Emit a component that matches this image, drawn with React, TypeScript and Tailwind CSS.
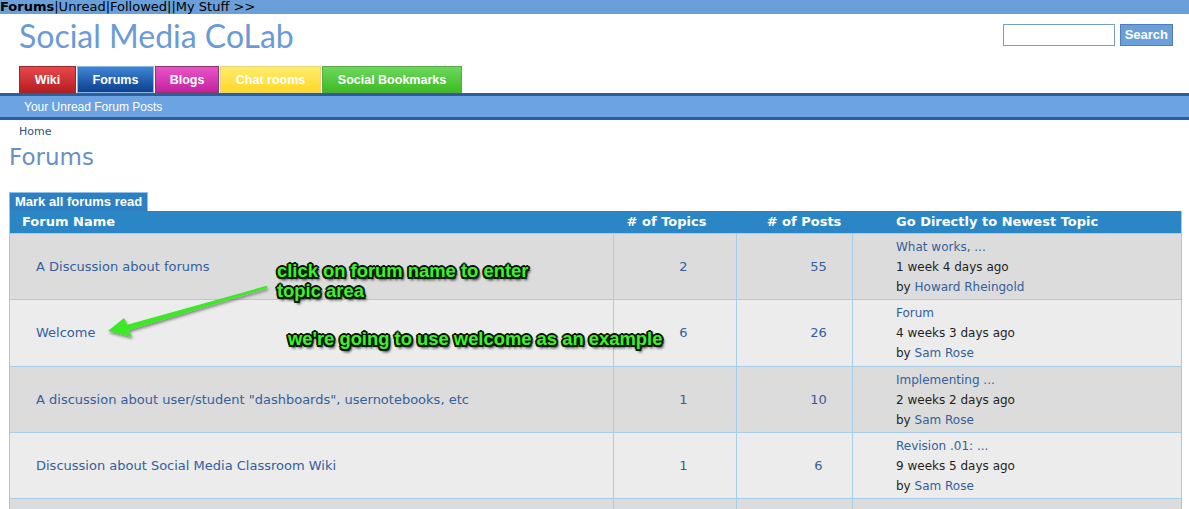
import React from "react";

const rows = [
  { name: "A Discussion about forums", topics: "2", posts: "55", latest: "What works, ...", ago: "1 week 4 days ago", by: "Howard Rheingold" },
  { name: "Welcome", topics: "6", posts: "26", latest: "Forum", ago: "4 weeks 3 days ago", by: "Sam Rose" },
  { name: 'A discussion about user/student "dashboards", usernotebooks, etc', topics: "1", posts: "10", latest: "Implementing ...", ago: "2 weeks 2 days ago", by: "Sam Rose" },
  { name: "Discussion about Social Media Classroom Wiki", topics: "1", posts: "6", latest: "Revision .01: ...", ago: "9 weeks 5 days ago", by: "Sam Rose" },
  { name: "", topics: "", posts: "", latest: "", ago: "", by: "" },
];

const tabs = [
  { label: "Wiki", cls: "w-[57px] bg-gradient-to-b from-[#e8484c] to-[#b51d22] border-[#9a2a2a]" },
  { label: "Forums", cls: "w-[77px] bg-gradient-to-b from-[#3f86d6] to-[#0d3f8c] border-[#8ab6e6]" },
  { label: "Blogs", cls: "w-[64px] bg-gradient-to-b from-[#ea52c8] to-[#c41f9f] border-[#8a3a6a]" },
  { label: "Chat rooms", cls: "w-[101px] bg-gradient-to-b from-[#ffec6a] to-[#ffd81e] border-[#e8d47a]" },
  { label: "Social Bookmarks", cls: "w-[140px] bg-gradient-to-b from-[#6cd85a] to-[#3dbb1f] border-[#5aa84a]" },
];

const outline =
  "[text-shadow:_2px_0_0_#0a1a05,_-2px_0_0_#0a1a05,_0_2px_0_#0a1a05,_0_-2px_0_#0a1a05,_1.5px_1.5px_0_#0a1a05,_-1.5px_-1.5px_0_#0a1a05,_1.5px_-1.5px_0_#0a1a05,_-1.5px_1.5px_0_#0a1a05,_2px_3px_3px_#000]";

export default function App() {
  return (
    <div className="w-[1189px] h-[509px] overflow-hidden bg-white font-['DejaVu_Sans',sans-serif]">
      {/* top links */}
      <div className="h-[14px] bg-[#6a9fd9] text-[13px] leading-[13px] text-black whitespace-nowrap overflow-hidden">
        <span className="font-bold">Forums</span>|Unread|Followed||My Stuff &gt;&gt;
      </div>

      {/* header */}
      <div className="flex justify-between h-[52px]">
        <div className="pl-[19px] pt-[4px] text-[32px] leading-[36px] text-[#6b9bd6] font-['Lato',sans-serif]">
          Social Media CoLab
        </div>
        <div className="flex items-start gap-[5px] pt-[10px] pr-[16px]">
          <input className="w-[112px] h-[22px] border border-[#7a9cc8] bg-white outline-none" />
          <button className="h-[22px] px-[4px] bg-[#6a9fd9] border border-[#4f7db8] text-white font-bold text-[13px] font-['Liberation_Sans',sans-serif] leading-[18px]">
            Search
          </button>
        </div>
      </div>

      {/* tabs */}
      <div className="flex pl-[19px] gap-px h-[27px]">
        {tabs.map((t) => (
          <div
            key={t.label}
            className={`${t.cls} border flex items-center justify-center pt-px text-white font-bold text-[12.5px] font-['Liberation_Sans',sans-serif]`}
          >
            {t.label}
          </div>
        ))}
      </div>

      {/* sub nav band */}
      <div className="border-y-[3px] border-[#2d5e9c] bg-[#6ca3e2] h-[27px] flex items-center pl-[24px] text-white text-[12px] font-['Liberation_Sans',sans-serif]">
        Your Unread Forum Posts
      </div>

      <div className="pl-[19px] pt-[5px] text-[11px] leading-[13px] text-[#2f4f80]">Home</div>
      <h1 className="pl-[9px] pt-[5px] text-[23px] leading-[28px] text-[#6a8fc4]">Forums</h1>

      <div className="px-[9px] pt-[21px]">
        <div className="flex">
          <div className="h-[19px] px-[5px] bg-[#2e80c2] border border-b-0 border-[#8ec0e8] text-white font-bold text-[13px] leading-[17px] font-['Liberation_Sans',sans-serif]">
            Mark all forums read
          </div>
        </div>

        <div className="relative w-[1173px] border-x border-[#9ccbee]">
          <div className="grid grid-cols-[603px_123px_116px_329px] h-[22px] bg-[#2b86c6] text-white font-bold text-[13px] leading-[22px]">
            <div className="pl-[12px]">Forum Name</div>
            <div className="text-center pr-[16px]"># of Topics</div>
            <div className="text-center pl-[20px]"># of Posts</div>
            <div className="pl-[44px]">Go Directly to Newest Topic</div>
          </div>

          {rows.map((r, i) => (
            <div
              key={i}
              className={`grid grid-cols-[603px_123px_116px_329px] border-t border-[#a6cdea] text-[13px] ${
                i === 1 ? "h-[67px]" : "h-[66px]"
              } ${i % 2 === 0 ? "bg-[#dcdcdc]" : "bg-[#ececec]"}`}
            >
              <div className="flex items-center pl-[26px] text-[#33609d]">{r.name}</div>
              <div className="flex items-center justify-center pl-[17px] border-l border-[#a6cdea] text-[#33609d]">{r.topics}</div>
              <div className="flex items-center justify-center pl-[48px] border-l border-[#a6cdea] text-[#33609d]">{r.posts}</div>
              <div className="flex flex-col justify-center border-l border-[#a6cdea] pl-[43px] text-[12px] leading-[20px]">
                <span className="text-[#33609d]">{r.latest}</span>
                <span className="text-[#1f1f1f]">{r.ago}</span>
                {r.by && (
                  <span className="text-[#1f1f1f]">
                    by <span className="text-[#33609d]">{r.by}</span>
                  </span>
                )}
              </div>
            </div>
          ))}

          {/* annotations */}
          <div className={`absolute left-[267px] top-[50px] text-[18.4px] leading-[20px] font-bold text-[#3ff02c] font-['Liberation_Sans',sans-serif] ${outline}`}>
            click on forum name to enter
            <br />
            topic area
          </div>
          <div className={`absolute left-[278px] top-[118px] text-[18.4px] leading-[20px] font-bold text-[#3ff02c] font-['Liberation_Sans',sans-serif] ${outline}`}>
            we're going to use welcome as an example
          </div>
          <svg className="absolute left-0 top-0 overflow-visible" width="300" height="140" viewBox="0 0 300 140">
            <defs>
              <filter id="sh" x="-10%" y="-30%" width="130%" height="160%">
                <feDropShadow dx="1" dy="2" stdDeviation="1.5" floodColor="#000" floodOpacity="0.45" />
              </filter>
            </defs>
            <polygon
              filter="url(#sh)"
              fill="#3ce826"
              points="256.7,74.8 257.3,77.2 118.75,119.2 122,126 98,120 114,107 117.25,113.8"
            />
          </svg>
        </div>
      </div>
    </div>
  );
}
